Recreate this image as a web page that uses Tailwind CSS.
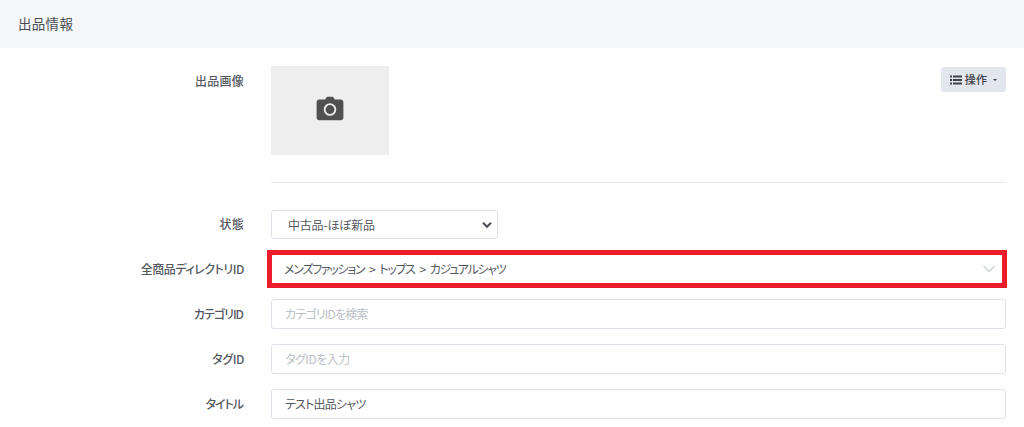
<!DOCTYPE html>
<html lang="ja">
<head>
  <meta charset="UTF-8" />
  <meta name="viewport" content="width=device-width, initial-scale=1.0" />
  <title>出品情報</title>
  <script src="https://cdn.jsdelivr.net/npm/@tailwindcss/browser@4"></script>
</head>
<body class="bg-white h-[427px] overflow-hidden font-['Noto_Sans_CJK_JP','Noto_Sans',sans-serif] text-[#55595f] [font-feature-settings:'palt']">
  <div class="h-12 bg-[#f5f6f8] pl-[18px] pb-px flex items-center text-[13.5px] tracking-[0.3px] text-[#4a4f55]">出品情報</div>

  <div class="pt-[18px] pr-[18px]">
    <!-- 出品画像 -->
    <div class="flex">
      <div class="w-[245px] shrink-0 pt-[6px] pr-px text-right text-xs font-medium leading-[18px] tracking-[0.25px]">出品画像</div>
      <div class="ml-[26px] flex-1 flex justify-between items-start">
        <div class="w-[118px] h-[89px] bg-[#eeeeee] flex items-center justify-center">
          <svg width="30" height="26" viewBox="0 0 28 24" class="mt-[-4px]">
            <path fill="#505050" d="M9.500 3.200 10.600 1.200Q11 .5 12 .5h4q1 0 1.400.7l1.100 2h5.300q2.700 0 2.700 2.700v14q0 2.600-2.700 2.600H4.200Q1.500 22.500 1.500 19.900V5.900q0-2.700 2.700-2.700z"/>
            <circle cx="14" cy="12.500" r="5" fill="none" stroke="#eeeeee" stroke-width="1.700"/>
          </svg>
        </div>
        <button class="w-[65px] h-[25px] mt-px bg-[#e3e6ed] rounded-[3px] flex items-center justify-center gap-[3px] text-[11px] font-medium text-[#3c4147]">
          <svg width="12" height="10" viewBox="0 0 12 10" fill="#3c4147"><rect y="0.500" width="2" height="2"/><rect x="3" y="0.500" width="9" height="2"/><rect y="4" width="2" height="2"/><rect x="3" y="4" width="9" height="2"/><rect y="7.500" width="2" height="2"/><rect x="3" y="7.500" width="9" height="2"/></svg>
          <span class="tracking-[0.3px]">操作</span>
          <span class="ml-[3px] w-0 h-0 border-x-[2px] border-x-transparent border-t-[2px] border-t-[#3c4147]"></span>
        </button>
      </div>
    </div>

    <div class="ml-[271px] mt-[27px] mb-[27px] h-px bg-[#e5e7ee]"></div>

    <div class="flex flex-col gap-[15px]">
      <!-- 状態 -->
      <div class="flex items-center">
        <label class="w-[245px] shrink-0 text-right text-xs font-medium tracking-[0.25px] pr-px pb-[2px]">状態</label>
        <div class="ml-[26px] w-[227px] h-[29px] border border-[#dee2e8] rounded-[3px] bg-white flex items-center justify-between pl-[16px] pr-[4px] text-xs text-[#55595f]">
          <span class="tracking-[-0.2px]">中古品-ほぼ新品</span>
          <svg width="12" height="8" viewBox="0 0 12 8"><path d="M2 1.800 6 5.800 10 1.800" fill="none" stroke="#4a4f55" stroke-width="2"/></svg>
        </div>
      </div>

      <!-- 全商品ディレクトリID -->
      <div class="flex items-center">
        <label class="w-[245px] shrink-0 text-right text-xs font-medium tracking-[-0.45px] pr-px">全商品ディレクトリID</label>
        <div class="relative ml-[26px] flex-1 h-[30px] border border-[#dee2e8] rounded-[3px] flex items-center justify-between pl-[12px] pr-[8px] text-xs text-[#55595f]">
          <span class="tracking-[-1.3px] [word-spacing:3.500px]">メンズファッション &gt; トップス &gt; カジュアルシャツ</span>
          <svg width="14" height="8" viewBox="0 0 14 8" class="mr-[1px]"><path d="M1.500 1 7 6.500 12.500 1" fill="none" stroke="#ced2da" stroke-width="1.300"/></svg>
          <div class="absolute left-[-5px] top-[-5px] right-[-2px] bottom-[-5px] border-[5px] border-[#ed1c2b] pointer-events-none"></div>
        </div>
      </div>

      <!-- カテゴリID -->
      <div class="flex items-center">
        <label class="w-[245px] shrink-0 text-right text-xs font-medium tracking-[-1px] pr-[2px]">カテゴリID</label>
        <div class="ml-[26px] flex-1 h-[30px] border border-[#dee2e8] rounded-[3px] flex items-center pl-[13px] text-xs text-[#bcc0c7] tracking-[-0.8px]">カテゴリIDを検索</div>
      </div>

      <!-- タグID -->
      <div class="flex items-center">
        <label class="w-[245px] shrink-0 text-right text-xs font-medium tracking-[-0.4px] pr-px">タグID</label>
        <div class="ml-[26px] flex-1 h-[30px] border border-[#dee2e8] rounded-[3px] flex items-center pl-[13px] text-xs text-[#bcc0c7] tracking-[-0.5px]">タグIDを入力</div>
      </div>

      <!-- タイトル -->
      <div class="flex items-center">
        <label class="w-[245px] shrink-0 text-right text-xs font-medium tracking-[-1px] pr-[2px]">タイトル</label>
        <div class="ml-[26px] flex-1 h-[30px] border border-[#dee2e8] rounded-[3px] flex items-center pl-[13px] text-xs text-[#55595f] tracking-[-0.8px]">テスト出品シャツ</div>
      </div>
    </div>
  </div>
</body>
</html>
